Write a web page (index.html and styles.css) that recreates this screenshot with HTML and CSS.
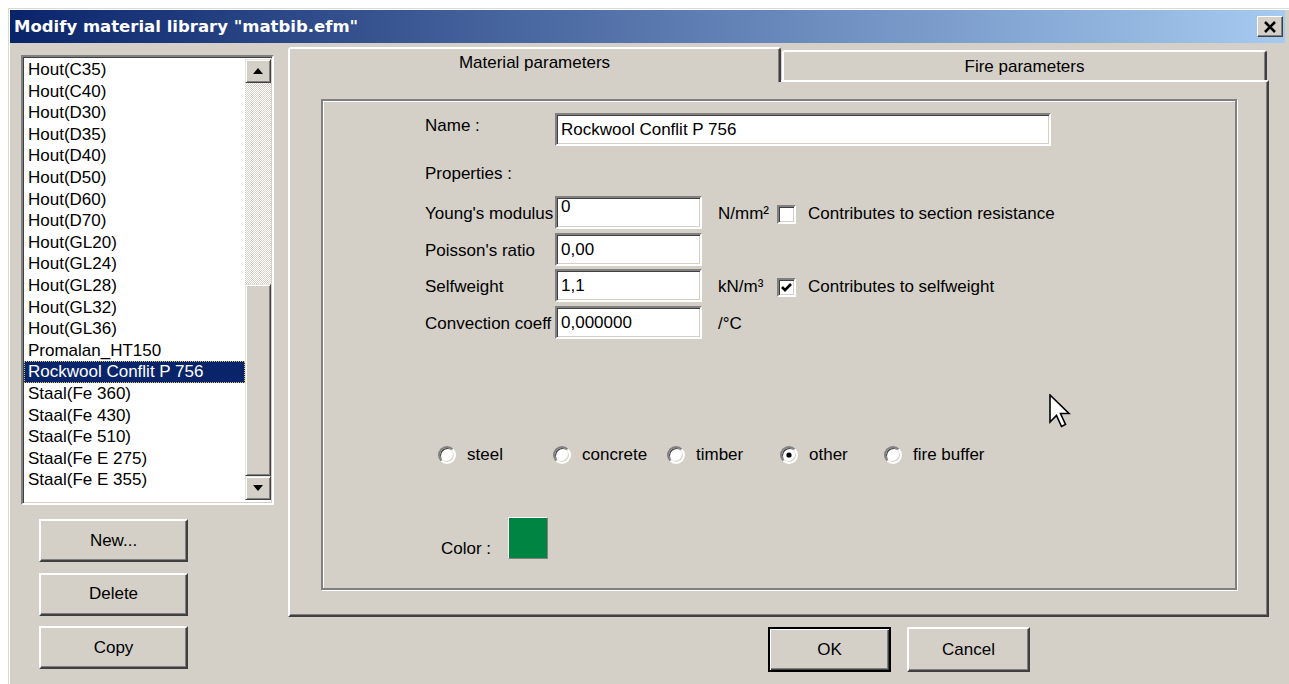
FILE: index.html
```html
<!DOCTYPE html>
<html lang="en">
<head>
<meta charset="utf-8">
<title>Modify material library</title>
<link rel="stylesheet" href="styles.css">
</head>
<body>
<div class="window">
  <div class="titlebar">
    <span class="title">Modify material library "matbib.efm"</span>
    <button class="close" type="button" aria-label="Close">
      <svg width="14" height="12" viewBox="0 0 14 12"><path d="M2 1 L12 11 M12 1 L2 11" stroke="#000" stroke-width="2.6" fill="none"/></svg>
    </button>
  </div>

  <div class="client">
    <div class="left">
      <div class="listbox">
        <ul class="items">
          <li>Hout(C35)</li>
          <li>Hout(C40)</li>
          <li>Hout(D30)</li>
          <li>Hout(D35)</li>
          <li>Hout(D40)</li>
          <li>Hout(D50)</li>
          <li>Hout(D60)</li>
          <li>Hout(D70)</li>
          <li>Hout(GL20)</li>
          <li>Hout(GL24)</li>
          <li>Hout(GL28)</li>
          <li>Hout(GL32)</li>
          <li>Hout(GL36)</li>
          <li>Promalan_HT150</li>
          <li class="sel">Rockwool Conflit P 756</li>
          <li>Staal(Fe 360)</li>
          <li>Staal(Fe 430)</li>
          <li>Staal(Fe 510)</li>
          <li>Staal(Fe E 275)</li>
          <li>Staal(Fe E 355)</li>
        </ul>
        <div class="vscroll">
          <div class="sbtn raised">
            <svg width="10" height="6" viewBox="0 0 10 6"><path d="M5 0 L10 6 L0 6 Z" fill="#000"/></svg>
          </div>
          <div class="track"></div>
          <div class="thumb raised"></div>
          <div class="sbtn raised">
            <svg width="10" height="6" viewBox="0 0 10 6"><path d="M0 0 L10 0 L5 6 Z" fill="#000"/></svg>
          </div>
        </div>
      </div>

      <div class="actions">
        <button class="btn side" type="button">New...</button>
        <button class="btn side" type="button">Delete</button>
        <button class="btn side" type="button">Copy</button>
      </div>
    </div>

    <div class="right">
      <div class="tabs">
        <div class="tab active">Material parameters</div>
        <div class="tab inactive">Fire parameters</div>
      </div>

      <div class="panel">
        <div class="group">
          <div class="row-name">
            <span class="lbl name-lbl">Name :</span>
            <div class="edit wide">Rockwool Conflit P 756</div>
          </div>

          <div class="props-title">Properties :</div>

          <div class="prop-rows">
            <div class="prow">
              <span class="lbl">Young's modulus</span>
              <div class="edit short top">0</div>
              <span class="unit">N/mm²</span>
              <span class="check"></span>
              <span class="check-lbl">Contributes to section resistance</span>
            </div>
            <div class="prow">
              <span class="lbl">Poisson's ratio</span>
              <div class="edit short">0,00</div>
            </div>
            <div class="prow">
              <span class="lbl">Selfweight</span>
              <div class="edit short">1,1</div>
              <span class="unit">kN/m³</span>
              <span class="check">
                <svg width="15" height="15" viewBox="0 0 15 15"><path d="M3 7 L6 10.2 L12 4" stroke="#000" stroke-width="2.6" fill="none"/></svg>
              </span>
              <span class="check-lbl">Contributes to selfweight</span>
            </div>
            <div class="prow">
              <span class="lbl">Convection coeff</span>
              <div class="edit short">0,000000</div>
              <span class="unit">/°C</span>
            </div>
          </div>

          <div class="radios">
            <label class="opt"><span class="radio"></span>steel</label>
            <label class="opt"><span class="radio"></span>concrete</label>
            <label class="opt"><span class="radio"></span>timber</label>
            <label class="opt"><span class="radio on"></span>other</label>
            <label class="opt"><span class="radio"></span>fire buffer</label>
          </div>

          <div class="colorrow">
            <span class="color-lbl">Color :</span>
            <span class="swatch"></span>
          </div>
        </div>
      </div>

      <div class="dlg-buttons">
        <button class="btn dlg default" type="button">OK</button>
        <button class="btn dlg" type="button">Cancel</button>
      </div>
    </div>
  </div>

  <svg class="cursor" width="22" height="36" viewBox="0 0 22 36">
    <path d="M1 1 L1 28 L7.5 21.5 L12.5 32.5 L16.5 30.5 L11.5 19.5 L20 19.5 Z" fill="#fff" stroke="#000" stroke-width="1.6" stroke-linejoin="miter"/>
  </svg>
</div>
</body>
</html>
```

FILE: styles.css
```css
* {
  box-sizing: border-box;
}

html,
body {
  margin: 0;
  height: 100%;
  overflow: hidden;
}

body {
  background: #fff;
  font-family: "Liberation Sans", Arial, sans-serif;
  font-size: 17px;
  color: #000;
}

/* Dialog frame */
.window {
  position: relative;
  margin: 8px 0 0 8px;
  width: 1284px;
  height: 680px;
  background: #d4d0c8;
  border: 1px solid;
  border-color: #dcdad4 #404040 #404040 #dcdad4;
  box-shadow: inset 1px 1px 0 #fff, inset -1px -1px 0 #808080;
  padding: 1px;
}

.titlebar {
  display: flex;
  align-items: center;
  height: 33px;
  margin-right: 5px;
  padding: 0 2px 0 4px;
  background: linear-gradient(90deg, #0a246a 0%, #a6caf0 100%);
}

.title {
  color: #fff;
  font: bold 16.5px "DejaVu Sans", Verdana, sans-serif;
  white-space: nowrap;
}

.close {
  margin-left: auto;
  width: 26px;
  height: 21px;
  padding: 0;
  display: flex;
  align-items: center;
  justify-content: center;
  background: #d4d0c8;
  border: 1px solid;
  border-color: #fff #404040 #404040 #fff;
  box-shadow: inset -1px -1px 0 #808080;
}

.client {
  display: flex;
  padding: 4px 0 0 11px;
}

/* Left column: material list and actions */
.left {
  flex: none;
  width: 253px;
  margin-top: 8px;
}

.listbox {
  display: flex;
  height: 450px;
  background: #fff;
  border: 2px solid;
  border-color: #808080 #fff #fff #808080;
  box-shadow: inset 1px 1px 0 #404040, inset -1px -1px 0 #d4d0c8;
}

.items {
  flex: 1;
  min-width: 0;
  margin: 0;
  padding: 2px 0 0 1px;
  list-style: none;
  overflow: hidden;
}

.items li {
  height: 21.6px;
  line-height: 21.6px;
  padding-left: 4px;
  white-space: nowrap;
}

.items li.sel {
  background: #0a246a;
  color: #fff;
  outline: 1px dotted #d8c070;
  outline-offset: -1px;
}

.vscroll {
  flex: none;
  width: 27px;
  display: flex;
  flex-direction: column;
  padding: 2px 1px 3px 0;
}

.raised {
  background: #d4d0c8;
  border: 1px solid;
  border-color: #e6e4de #404040 #404040 #e6e4de;
  box-shadow: inset 1px 1px 0 #fff, inset -1px -1px 0 #808080;
}

.sbtn {
  flex: none;
  height: 24px;
  display: flex;
  align-items: center;
  justify-content: center;
}

.track {
  flex: 1;
  background: repeating-conic-gradient(#d4d0c8 0 25%, #fff 0 50%) 0 0 / 2px 2px;
}

.thumb {
  flex: none;
  height: 192px;
}

.actions {
  display: flex;
  flex-direction: column;
  align-items: flex-start;
  gap: 10.5px;
  margin: 14px 0 0 18px;
}

/* Push buttons */
.btn {
  padding: 0;
  font-family: "Liberation Sans", Arial, sans-serif;
  font-size: 17px;
  color: #000;
  background: #d4d0c8;
  border: 2px solid;
  border-color: #fff #404040 #404040 #fff;
  box-shadow: inset -1px -1px 0 #808080;
}

.btn.side {
  width: 149px;
  height: 43px;
}

.btn.dlg {
  width: 123px;
  height: 45px;
}

.btn.default {
  border: 2px solid #000;
  box-shadow: inset 1px 1px 0 #fff, inset -1px -1px 0 #404040, inset -2px -2px 0 #808080;
}

/* Right column: tab control */
.right {
  flex: none;
  width: 981px;
  margin-left: 14px;
}

.tabs {
  display: flex;
  align-items: flex-end;
  height: 33px;
}

.tab {
  flex: none;
  background: #d4d0c8;
  border: 2px solid;
  border-bottom: 0;
  border-color: #fff #404040 #404040 #fff;
  border-radius: 3px 3px 0 0;
  box-shadow: inset -1px 0 0 #808080;
  text-align: center;
  line-height: 20px;
  white-space: nowrap;
}

.tab.active {
  position: relative;
  z-index: 1;
  width: 493px;
  height: 35px;
  margin-bottom: -2px;
  padding-top: 4px;
}

.tab.inactive {
  width: 485px;
  height: 30px;
  margin-left: 1px;
  padding-top: 5px;
}

.panel {
  height: 537px;
  border: 2px solid;
  border-color: #fff #404040 #404040 #fff;
  box-shadow: inset -1px -1px 0 #808080;
  padding: 17px 0 0 31px;
}

.group {
  width: 916px;
  height: 491px;
  border: 2px solid #808080;
  box-shadow: 1px 1px 0 #fff, inset 1px 1px 0 #fff;
  padding-left: 102px;
}

.row-name {
  display: flex;
  align-items: flex-start;
  margin-top: 12px;
}

.lbl {
  flex: none;
  width: 130px;
  line-height: 20px;
  white-space: nowrap;
  overflow: hidden;
}

.name-lbl {
  padding-top: 3px;
}

.edit {
  flex: none;
  height: 33px;
  padding: 0 4px;
  line-height: 29px;
  white-space: nowrap;
  background: #fff;
  border: 2px solid;
  border-color: #808080 #fff #fff #808080;
  box-shadow: inset 1px 1px 0 #404040, inset -1px -1px 0 #d4d0c8;
}

.edit.wide {
  width: 496px;
}

.edit.short {
  width: 147px;
}

.edit.top {
  line-height: 18px;
}

.props-title {
  margin-top: 18px;
  line-height: 20px;
}

.prop-rows {
  display: flex;
  flex-direction: column;
  gap: 3.67px;
  margin-top: 12px;
}

.prow {
  display: flex;
  align-items: center;
  height: 33px;
}

.prow .lbl,
.unit,
.check-lbl {
  padding-top: 3px;
}

.unit {
  flex: none;
  width: 59px;
  margin-left: 16px;
  white-space: nowrap;
}

.check {
  flex: none;
  width: 19px;
  height: 19px;
  margin-top: 3px;
  display: flex;
  align-items: center;
  justify-content: center;
  background: #fff;
  border: 2px solid;
  border-color: #808080 #fff #fff #808080;
  box-shadow: inset 1px 1px 0 #404040, inset -1px -1px 0 #d4d0c8;
}

.check-lbl {
  margin-left: 12px;
  white-space: nowrap;
}

/* Material type option buttons */
.radios {
  display: grid;
  grid-template-columns: 115px 114px 113px 104px auto;
  margin: 106px 0 0 13px;
}

.opt {
  display: flex;
  align-items: center;
  gap: 11px;
  height: 20px;
  white-space: nowrap;
}

.radio {
  flex: none;
  position: relative;
  width: 18px;
  height: 18px;
  border-radius: 50%;
  background: #fff;
  border: 2px solid;
  border-color: #808080 #fff #fff #808080;
  box-shadow: inset 1px 1px 0 #404040, inset -1px -1px 0 #d4d0c8;
}

.radio.on::after {
  content: "";
  position: absolute;
  left: 5px;
  top: 5px;
  width: 4px;
  height: 4px;
  border-radius: 50%;
  background: #000;
  box-shadow: 0 0 0 0.6px #000;
}

.colorrow {
  display: flex;
  align-items: flex-end;
  margin: 52px 0 0 16px;
}

.color-lbl {
  flex: none;
  width: 67px;
  line-height: 20px;
}

.swatch {
  width: 40px;
  height: 42px;
  background: #008442;
  border: 1px solid;
  border-color: #fff #808080 #808080 #fff;
}

.dlg-buttons {
  display: flex;
  gap: 16px;
  margin: 10px 0 0 480px;
}

/* Mouse pointer resting over the dialog */
.cursor {
  position: absolute;
  left: 1040px;
  top: 385px;
  pointer-events: none;
}
```
